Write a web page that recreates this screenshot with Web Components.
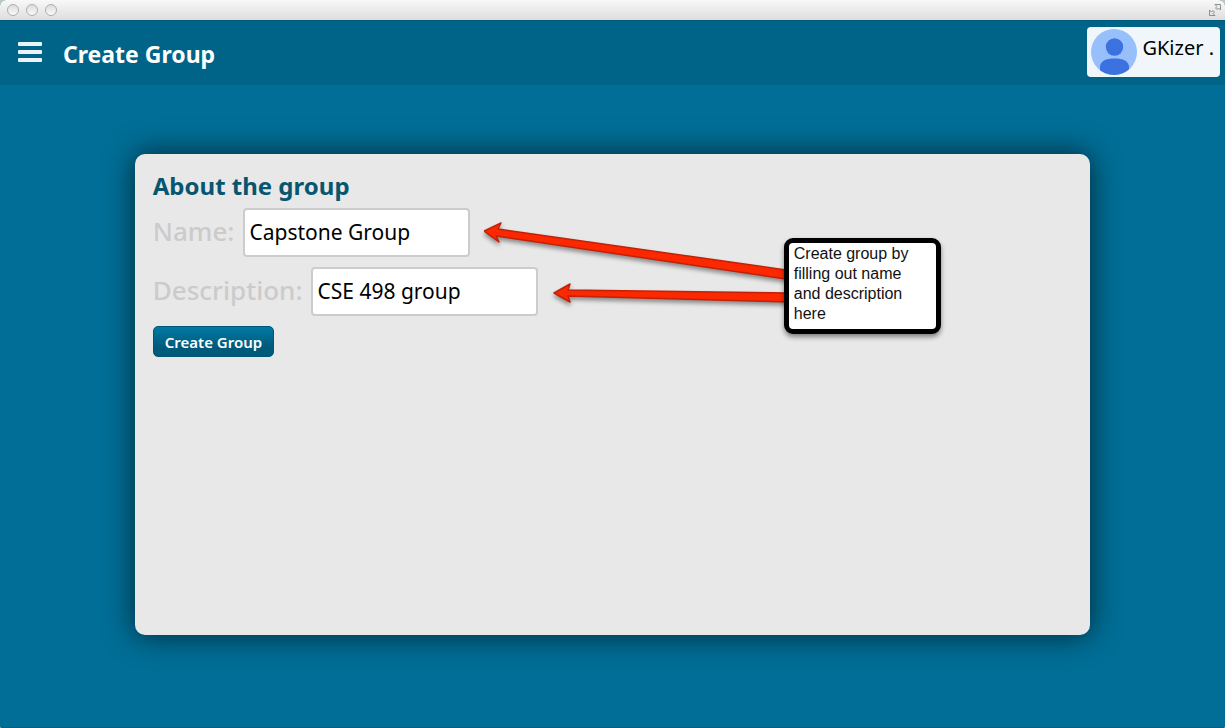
<!DOCTYPE html>
<html lang="en">
<head>
<meta charset="utf-8">
<meta name="viewport" content="width=device-width, initial-scale=1">
<title>Create Group</title>
<style>
body { margin: 0; font-family: "Noto Sans", "Open Sans", sans-serif; background: #bfc6ca; }
</style>
</head>
<body>
<app-window>
  <app-header slot="header" heading="Create Group" user="GKizer ."></app-header>
  <group-panel>
    <text-field label="Name:" value="Capstone Group"></text-field>
    <text-field label="Description:" value="CSE 498 group"></text-field>
    <action-button>Create Group</action-button>
    <call-out slot="note">Create group by filling out name and description here</call-out>
  </group-panel>
</app-window>

<script>
class BaseElement extends HTMLElement {
  connectedCallback() {
    if (this.shadowRoot) return;
    this.attachShadow({ mode: "open" }).innerHTML =
      "<style>*{box-sizing:border-box}</style>" + this.view();
  }
  attr(name) { return this.getAttribute(name) || ""; }
}

customElements.define("app-window", class extends BaseElement {
  view() {
    return `
    <style>
      :host { box-sizing: border-box; display: flex; flex-direction: column; min-height: 100vh;
        background: #006e96; border-radius: 6px 6px 2px 2px; overflow: hidden; border-bottom: 1px solid #005f83; }
      .bar { display: flex; align-items: center; gap: 7px; height: 20px; padding: 0 3px 0 7px;
        background: linear-gradient(#f8f8f8, #dedede); }
      .bar button { width: 12px; height: 12px; padding: 0; border: 1px solid #adadad; border-radius: 50%;
        background: linear-gradient(#dcdcdc, #fafafa); }
      .bar svg { margin-left: auto; }
      main { flex: 1; display: flex; flex-direction: column; padding: 69px 11% 92px; }
    </style>
    <div class="bar">
      <button aria-label="Close"></button><button aria-label="Minimize"></button><button aria-label="Zoom"></button>
      <svg width="14" height="14" viewBox="0 0 14 14" fill="none" stroke="#8e8e8e" stroke-width="1">
        <path d="M7 1.500h5.500V7L10.500 5 9 6.500 7.500 5 9 3.500z"/>
        <path d="M7 12.500H1.500V7l2 2L5 7.500 6.500 9 5 10.500z"/>
      </svg>
    </div>
    <slot name="header"></slot>
    <main><slot></slot></main>`;
  }
});

customElements.define("app-header", class extends BaseElement {
  view() {
    return `
    <style>
      :host { display: block; }
      header { display: flex; align-items: center; height: 65px; padding: 0 5px 2px 18px;
        background: #006489; border-top: 1px solid #00587a; }
      .menu { display: block; padding: 0; border: 0; background: none; margin-right: 21px; height: 20px; }
      .menu svg { display: block; }
      h1 { margin: 0; font-size: 23px; line-height: 32px; color: #fff; padding-top: 4px; }
      .user { display: flex; gap: 5px; margin-left: auto; height: 50px; padding: 2px 6px 2px 4px;
        border: 0; border-radius: 4px; background: #f1f6fa; font: 20px/38px "Noto Sans", sans-serif; color: #000; }
      .user svg { display: block; }
    </style>
    <header>
      <button class="menu" aria-label="Menu">
        <svg width="24" height="20" viewBox="0 0 24 20" fill="#e9f3f8">
          <rect width="24" height="4" rx="1"/><rect y="8" width="24" height="4" rx="1"/><rect y="16" width="24" height="4" rx="1"/>
        </svg>
      </button>
      <h1>${this.attr("heading")}</h1>
      <button class="user">
        <svg width="46" height="46" viewBox="0 0 46 46">
          <clipPath id="disc"><circle cx="23" cy="23" r="23"/></clipPath>
          <g clip-path="url(#disc)">
            <rect width="46" height="46" fill="#96bffc"/>
            <circle cx="23.500" cy="18" r="8.700" fill="#3c71e0"/>
            <path d="M9 46V38c0-6 6-8.500 14.500-8.500S38 32 38 38v8z" fill="#3c71e0"/>
          </g>
        </svg>
        <span>${this.attr("user")}</span>
      </button>
    </header>`;
  }
});

customElements.define("group-panel", class extends BaseElement {
  view() {
    return `
    <style>
      :host { flex: 1; display: block; position: relative; border-radius: 10px; background: #e8e8e8;
        box-shadow: 0 0 30px rgba(0,0,0,.65); }
      form { display: flex; flex-direction: column; align-items: flex-start; gap: 10px; padding: 16px 18px; }
      h2 { margin: 0 0 -4px; font-size: 24px; line-height: 32px; color: #07566f; }
    </style>
    <form>
      <h2>About the group</h2>
      <slot></slot>
    </form>
    <slot name="note"></slot>`;
  }
});

customElements.define("text-field", class extends BaseElement {
  view() {
    return `
    <style>
      :host { display: block; }
      label { display: flex; align-items: center; gap: 9px; }
      span { font-size: 26px; line-height: 36px; font-weight: 500; color: #cbcbcb; padding-bottom: 4px; }
      input { width: 227px; height: 49px; padding: 0 5px 2px 4px; border: 2px solid #ccc; border-radius: 4px;
        background: #fff; color: #000; font: 21px "Noto Sans", sans-serif; outline: 0; }
    </style>
    <label><span>${this.attr("label")}</span><input type="text" value="${this.attr("value")}"></label>`;
  }
});

customElements.define("action-button", class extends BaseElement {
  view() {
    return `
    <style>
      :host { display: block; }
      button { display: block; height: 31px; padding: 0 11px; border: 1px solid #005474; border-radius: 5px;
        background: linear-gradient(#0079a4, #005a7b 70%); color: #fff;
        font: 600 15px/28px "Noto Sans", sans-serif; }
    </style>
    <button type="button"><slot></slot></button>`;
  }
});

customElements.define("call-out", class extends BaseElement {
  view() {
    return `
    <style>
      :host { position: absolute; left: 349px; top: 60px; display: block; width: 457px; height: 120px;
        pointer-events: none; }
      svg { display: block; filter: drop-shadow(0 3px 2px rgba(0,0,0,.4)); }
      p { position: absolute; right: 0; top: 24px; width: 157px; height: 96px; margin: 0;
        padding: 1px 5px; border: 5px solid #000; border-radius: 9px; background: #fff; color: #111;
        font: 16px/20px "Liberation Sans", sans-serif; box-shadow: 0 3px 5px rgba(0,0,0,.45); }
    </style>
    <svg width="457" height="120" viewBox="0 0 457 120" fill="#fb2800" stroke="#c32008" stroke-width="1.500" stroke-linejoin="round">
      <path d="M0 17L17 9l-3 6L302 56v9L12 22l3 6z"/>
      <path d="M70 79l16-9-2 6 220 3v9L84 82l2 6z"/>
    </svg>
    <p><slot></slot></p>`;
  }
});
</script>
</body>
</html>
